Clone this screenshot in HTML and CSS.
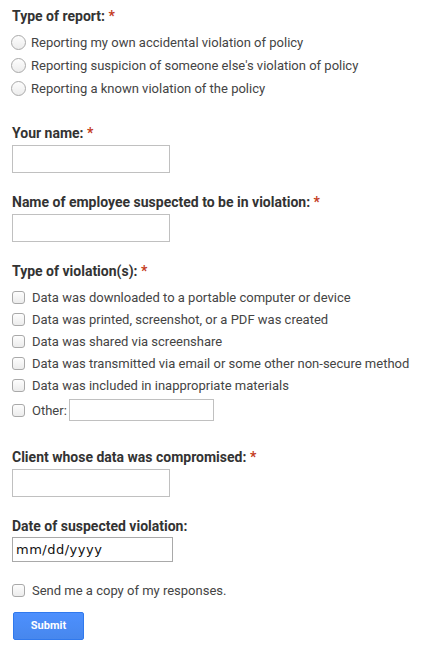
FILE: index.html
```html
<!DOCTYPE html>
<html>
<head>
<meta charset="utf-8">
<link rel="stylesheet" href="styles.css">
</head>
<body>
<form class="form">
  <div class="item first">
    <div class="label">Type of report: <span class="req">*</span></div>
    <div class="choices">
      <div class="choice"><span class="radio"></span><span>Reporting my own accidental violation of policy</span></div>
      <div class="choice"><span class="radio"></span><span>Reporting suspicion of someone else's violation of policy</span></div>
      <div class="choice"><span class="radio"></span><span>Reporting a known violation of the policy</span></div>
    </div>
  </div>

  <div class="item">
    <div class="label">Your name: <span class="req">*</span></div>
    <div class="textbox"></div>
  </div>

  <div class="item">
    <div class="label">Name of employee suspected to be in violation: <span class="req">*</span></div>
    <div class="textbox"></div>
  </div>

  <div class="item checkitem">
    <div class="label">Type of violation(s): <span class="req">*</span></div>
    <div class="choices checks">
      <div class="choice"><span class="check"></span><span>Data was downloaded to a portable computer or device</span></div>
      <div class="choice"><span class="check"></span><span>Data was printed, screenshot, or a PDF was created</span></div>
      <div class="choice"><span class="check"></span><span>Data was shared via screenshare</span></div>
      <div class="choice"><span class="check"></span><span>Data was transmitted via email or some other non-secure method</span></div>
      <div class="choice"><span class="check"></span><span>Data was included in inappropriate materials</span></div>
      <div class="choice other"><span class="check"></span><span>Other:</span><span class="otherbox"></span></div>
    </div>
  </div>

  <div class="item">
    <div class="label">Client whose data was compromised: <span class="req">*</span></div>
    <div class="textbox"></div>
  </div>

  <div class="item dateitem">
    <div class="label">Date of suspected violation:</div>
    <div class="datebox">mm/dd/yyyy</div>
  </div>

  <div class="choice copy"><span class="check"></span><span>Send me a copy of my responses.</span></div>

  <div class="actions"><span class="submit">Submit</span></div>
</form>
</body>
</html>
```
FILE: styles.css
```css
html, body {
  margin: 0;
  padding: 0;
  background: #fff;
}
.form {
  padding: 8px 12px 0 12px;
  font-family: Roboto, "Liberation Sans", Arial, sans-serif;
  color: #333;
}
.item {
  margin-bottom: 21px;
}
.item.first {
  margin-bottom: 25px;
}
.item.checkitem {
  margin-bottom: 26px;
}
.item.dateitem {
  margin-bottom: 17px;
}
.label {
  font-weight: bold;
  font-size: 14px;
  line-height: 17px;
  color: #333;
}
.req {
  color: #c43b1d;
}
.choices {
  margin-top: 6px;
  display: flex;
  flex-direction: column;
}
.choice {
  display: flex;
  align-items: center;
  height: 23px;
  font-size: 13px;
  color: #444;
}
.checks .choice {
  height: 22px;
}
.checks .choice.other {
  height: 26px;
  margin-top: 1px;
}
.radio {
  width: 13px;
  height: 13px;
  border: 1px solid #a9a9a9;
  border-radius: 50%;
  background: linear-gradient(#fdfdfd, #ececec);
  margin-right: 5px;
  margin-left: -1px;
  flex: none;
}
.check {
  width: 11px;
  height: 11px;
  border: 1px solid #a9a9a9;
  border-radius: 3px;
  background: linear-gradient(#fdfdfd, #ececec);
  margin-right: 7px;
  flex: none;
}
.otherbox {
  width: 143px;
  height: 20px;
  border: 1px solid #c0c0c0;
  margin-left: 2px;
}
.textbox {
  margin-top: 3px;
  width: 156px;
  height: 26px;
  border: 1px solid #c0c0c0;
}
.datebox {
  margin-top: 2px;
  box-sizing: border-box;
  width: 161px;
  height: 25px;
  border: 1px solid #a9a9a9;
  padding-left: 3px;
  font-family: "DejaVu Sans", Verdana, sans-serif;
  font-size: 13px;
  letter-spacing: 0.5px;
  line-height: 23px;
  color: #111;
}
.copy {
  margin-top: 1px;
  height: 22px;
}
.actions {
  margin-top: 11px;
  padding-left: 1px;
}
.submit {
  display: inline-block;
  width: 71px;
  height: 28px;
  box-sizing: border-box;
  background: linear-gradient(#4d90fe, #4787ed);
  border: 1px solid #3079ed;
  border-radius: 2px;
  color: #fff;
  font-weight: bold;
  font-size: 11px;
  line-height: 26px;
  text-align: center;
}
```
